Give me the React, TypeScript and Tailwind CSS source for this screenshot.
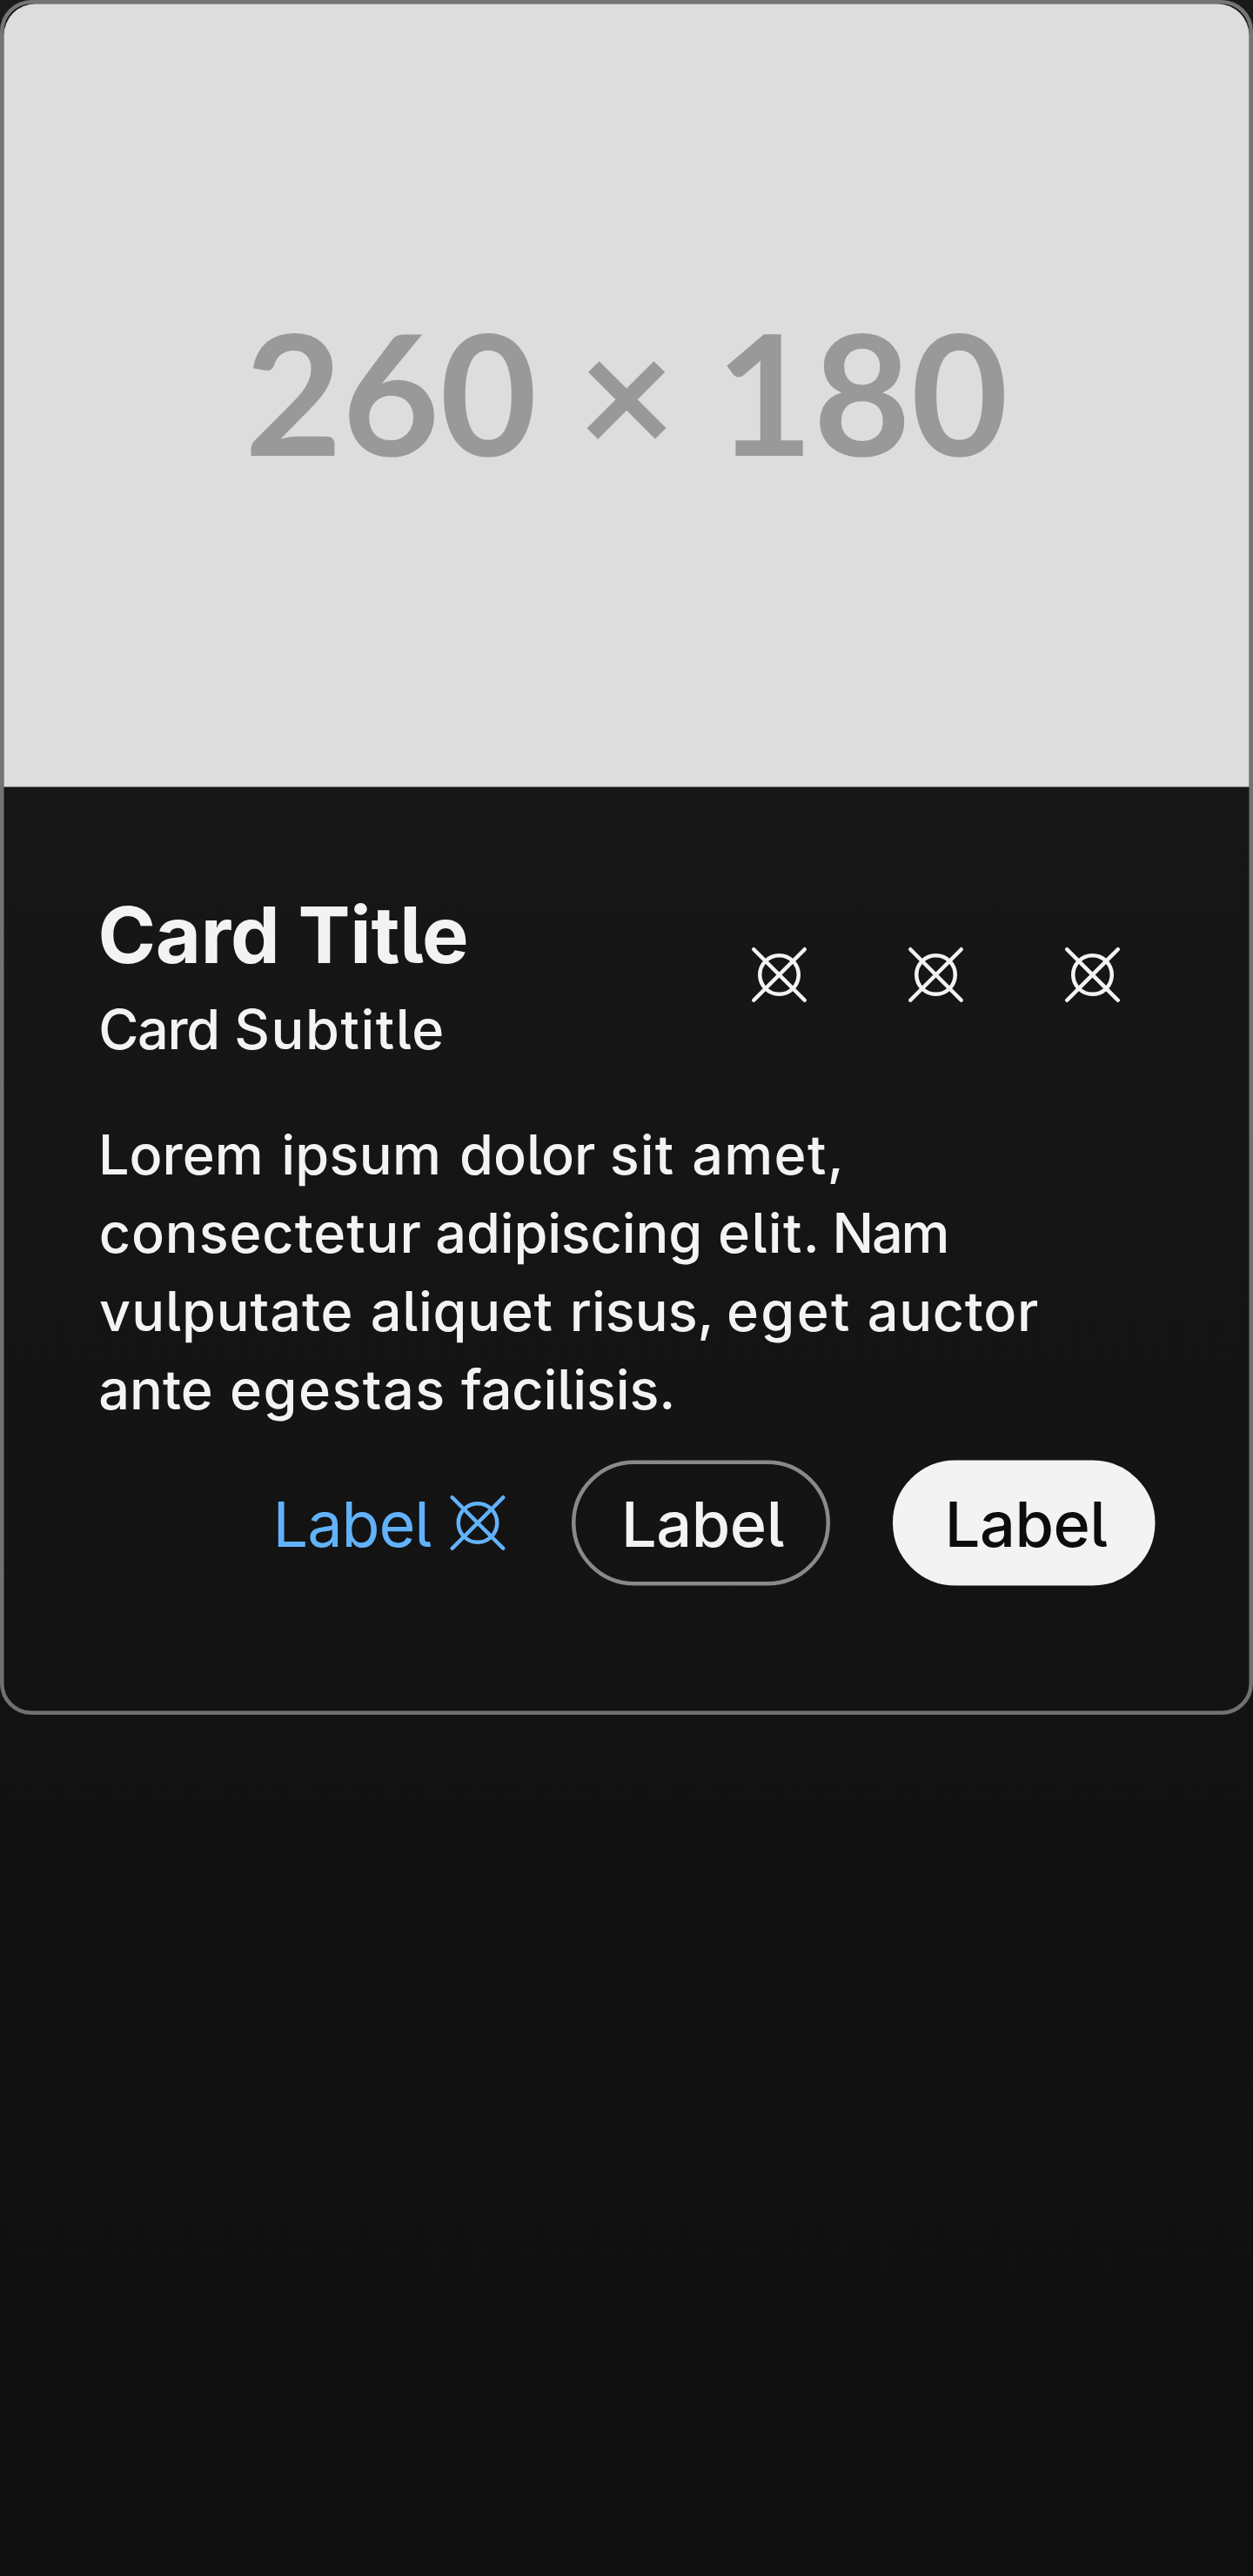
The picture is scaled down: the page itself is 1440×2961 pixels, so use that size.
import type { ReactNode } from "react";

function PlaceholderIcon() {
  return (
    <svg className="size-4 shrink-0" viewBox="0 0 16 16" fill="none" stroke="currentColor" strokeLinecap="round">
      <circle cx="8" cy="8" r="4.95" />
      <path d="M1.5 1.5l13 13M14.5 1.5l-13 13" />
    </svg>
  );
}

function IconButton() {
  return (
    <button className="flex size-8 items-center justify-center rounded-full">
      <PlaceholderIcon />
    </button>
  );
}

function PillButton({ className, children }: { className: string; children: ReactNode }) {
  return (
    <button
      className={`flex h-8 items-center justify-center rounded-full border text-base leading-6 font-medium tracking-[-0.1px] ${className}`}
    >
      {children}
    </button>
  );
}

type Word = [text: string, spacing: string];

const lines: Word[][] = [
  [
    ["Lorem ", "ml-[0.1px] [word-spacing:0.8px]"],
    ["ipsum ", "tracking-[0.07px] [word-spacing:0.78px]"],
    ["dolor ", "[word-spacing:-0.1px]"],
    ["sit ", "tracking-[0.25px] [word-spacing:0.4px]"],
    ["amet,", "tracking-[0.3px]"],
  ],
  [
    ["consectetur ", "ml-[0.25px] tracking-[0.2px] [word-spacing:-0.45px]"],
    ["adipiscing ", "tracking-[-0.04px] [word-spacing:0.3px]"],
    ["elit. ", "tracking-[0.3px] [word-spacing:-0.95px]"],
    ["Nam", "tracking-[-0.5px]"],
  ],
  [
    ["vulputate ", "ml-[0.35px] tracking-[0.2px] [word-spacing:0.35px]"],
    ["aliquet ", "tracking-[0.15px] [word-spacing:0.4px]"],
    ["risus, ", "[word-spacing:-0.4px]"],
    ["eget ", "tracking-[0.5px] [word-spacing:-0.2px]"],
    ["auctor", "tracking-[0.15px]"],
  ],
  [
    ["ante ", "ml-[0.2px] [word-spacing:0.5px]"],
    ["egestas ", "tracking-[0.33px] [word-spacing:-0.24px]"],
    ["facilisis.", "tracking-[-0.03px]"],
  ],
];

export default function App() {
  return (
    <div className="h-[2961px] w-full overflow-hidden bg-linear-to-b from-[#1a1a1a] to-[#0f0f0f] font-['Inter',sans-serif] [font-feature-settings:'cv05']">
      {/* The card is laid out at 320px and magnified as a whole. */}
      <article className="w-[320px] origin-top-left scale-[4.5] rounded-lg border border-white/40 text-[#f3f3f3]">
        <div className="flex h-50 items-center justify-center rounded-t-lg bg-[#dddddd] pt-[2px]">
          <span className="-translate-y-[0.56px] font-['Lato',sans-serif] text-[42.9px] leading-none font-bold whitespace-pre text-[#999999] [text-rendering:geometricPrecision]">
            260 × 180
          </span>
        </div>
        <div className="flex flex-col p-6">
          <header className="flex items-center justify-between">
            <div>
              <h2 className="text-xl leading-7 font-bold tracking-[-0.06px]">Card Title</h2>
              <p className="text-sm leading-5 font-medium whitespace-pre">
                <span className="ml-[0.15px] tracking-[-0.3px] [word-spacing:0.45px]">{"Card "}</span>
                <span className="tracking-[0.34px]">Subtitle</span>
              </p>
            </div>
            <div className="flex gap-2">
              <IconButton />
              <IconButton />
              <IconButton />
            </div>
          </header>
          <p className="mt-3 text-sm leading-5 font-medium whitespace-pre">
            {lines.map((words, i) => (
              <span key={i} className="block">
                {words.map(([text, spacing]) => (
                  <span key={text} className={spacing}>
                    {text}
                  </span>
                ))}
              </span>
            ))}
          </p>
          <div className="flex items-center justify-end gap-4 py-2">
            <a className="flex items-center gap-1 text-base leading-6 tracking-[-0.25px] text-[#62b2fb]">
              Label
              <PlaceholderIcon />
            </a>
            <PillButton className="w-[66px] border-white/50 pl-[0.9px]">Label</PillButton>
            <PillButton className="w-[67px] border-[#f3f3f3] bg-[#f3f3f3] pl-[1.1px] text-[#0d0d0d]">Label</PillButton>
          </div>
        </div>
      </article>
    </div>
  );
}
